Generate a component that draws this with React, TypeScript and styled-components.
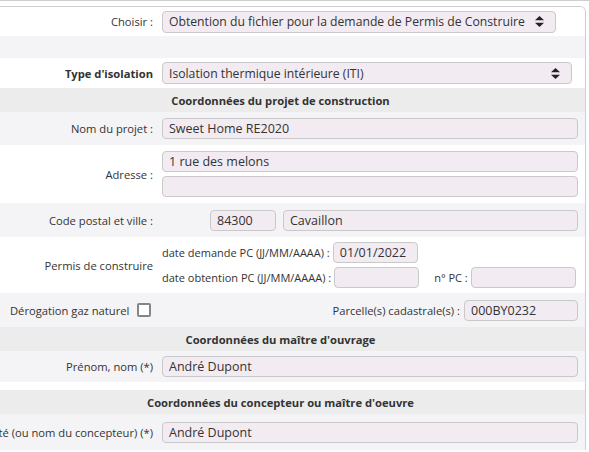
import React from "react";
import styled, { createGlobalStyle } from "styled-components";

const Global = createGlobalStyle`
  html, body { margin: 0; padding: 0; background: #fff; overflow: hidden; }
  body { font-family: "Open Sans", "Noto Sans", sans-serif; font-size: 11.2px; color: #333; }
`;

const TopLine = styled.div`
  height: 6px;
  border-top: 1px solid #cfcfcf;
  box-sizing: border-box;
`;

const Panel = styled.div`
  width: 586px;
  border-top: 1px solid #cfcfcf;
  border-right: 1px solid #cfcfcf;
  border-top-right-radius: 6px;
  box-sizing: border-box;
  overflow: hidden;
`;

const Row = styled.div<{ $bg: string; $h: number }>`
  display: flex;
  align-items: center;
  background: ${(p) => p.$bg};
  height: ${(p) => p.$h}px;
  box-sizing: border-box;
`;

const Label = styled.div<{ $bold?: boolean }>`
  flex: 0 0 153px;
  width: 153px;
  min-width: 0;
  display: flex;
  justify-content: flex-end;
  white-space: nowrap;
  font-weight: ${(p) => (p.$bold ? 700 : 400)};
  margin-right: 9px;
`;

const Field = styled.div`
  flex: 1;
  display: flex;
  flex-direction: column;
  align-items: stretch;
  gap: 4px;
  padding-right: 7px;
`;

const Header = styled.div<{ $h: number }>`
  background: #ececec;
  height: ${(p) => p.$h}px;
  display: flex;
  align-items: center;
  justify-content: center;
  padding-right: 24px;
  font-weight: 700;
`;

const Gap = styled.div<{ $h: number }>`
  height: ${(p) => p.$h}px;
  background: #fff;
`;

const Input = styled.div<{ $w?: number; $grow?: boolean }>`
  box-sizing: border-box;
  height: 21px;
  ${(p) => (p.$w ? `width: ${p.$w}px; flex-shrink: 0; align-self: flex-start;` : "")}
  ${(p) => (p.$grow ? "flex: 1;" : "")}
  background: #f2ebf2;
  border: 1px solid #c9c9c9;
  border-radius: 4px;
  padding: 0 6px;
  display: flex;
  align-items: center;
  font-size: 12.5px;
  white-space: nowrap;
  overflow: hidden;
`;

const Select = styled(Input)`
  height: 22px;
  font-size: 12.2px;
  justify-content: space-between;
  padding-right: 11px;
`;

const Inline = styled.div<{ $gap?: number }>`
  display: flex;
  align-items: center;
  gap: ${(p) => p.$gap ?? 3}px;
  white-space: nowrap;
`;

const SubLabel = styled.span<{ $ml?: number }>`
  font-size: 11px;
  margin-left: ${(p) => p.$ml ?? 0}px;
`;

const Grid = styled.div`
  display: flex;
  flex-direction: column;
  gap: 4px;
`;

const Check = styled.div`
  width: 10px;
  height: 10px;
  border: 2px solid #858585;
  border-radius: 2px;
  background: #fff;
  margin-left: 4px;
`;

const Half = styled.div<{ $end?: boolean }>`
  flex: 1;
  display: flex;
  align-items: center;
  justify-content: ${(p) => (p.$end ? "flex-end" : "flex-start")};
  gap: 4px;
  white-space: nowrap;
`;

const Arrows = () => (
  <svg width="9" height="11" viewBox="0 0 9 11">
    <path d="M4.5 0 L9 4.2 L0 4.2 Z" fill="#222" />
    <path d="M4.5 11 L9 6.8 L0 6.8 Z" fill="#222" />
  </svg>
);

const LIGHT = "#f4f3f5";

export default function App() {
  return (
    <>
      <Global />
      <TopLine />
      <Panel>
        <Row $bg="#fff" $h={29}>
          <Label>Choisir :</Label>
          <Field>
            <Select $w={394}>
              <span>Obtention du fichier pour la demande de Permis de Construire</span>
              <Arrows />
            </Select>
          </Field>
        </Row>
        <Row $bg={LIGHT} $h={22} />
        <Row $bg="#fff" $h={30}>
          <Label $bold>Type d'isolation</Label>
          <Field>
            <Select $w={410}>
              <span>Isolation thermique intérieure (ITI)</span>
              <Arrows />
            </Select>
          </Field>
        </Row>
        <Header $h={24}>Coordonnées du projet de construction</Header>
        <Row $bg={LIGHT} $h={33}>
          <Label>Nom du projet :</Label>
          <Field>
            <Input>Sweet Home RE2020</Input>
          </Field>
        </Row>
        <Row $bg="#fff" $h={58}>
          <Label>Adresse :</Label>
          <Field>
            <Input>1 rue des melons</Input>
            <Input />
          </Field>
        </Row>
        <Row $bg={LIGHT} $h={34}>
          <Label>Code postal et ville :</Label>
          <Field>
            <Inline $gap={7}>
              <Inline $gap={0}>
                <span style={{ width: 48 }} />
                <Input $w={66}>84300</Input>
              </Inline>
              <Input $grow>Cavaillon</Input>
            </Inline>
          </Field>
        </Row>
        <Row $bg="#fff" $h={56}>
          <Label>Permis de construire</Label>
          <Grid>
            <Inline $gap={3}>
              <SubLabel>date demande PC (JJ/MM/AAAA) :</SubLabel>
              <Input $w={85}>01/01/2022</Input>
            </Inline>
            <Inline $gap={3}>
              <SubLabel>date obtention PC (JJ/MM/AAAA) :</SubLabel>
              <Input $w={85} />
              <SubLabel $ml={12}>n° PC :</SubLabel>
              <Input $w={105} />
            </Inline>
          </Grid>
        </Row>
        <Row $bg={LIGHT} $h={34}>
          <Half style={{ paddingLeft: 10 }}>
            <span>Dérogation gaz naturel</span>
            <Check />
          </Half>
          <Half $end style={{ paddingRight: 7 }}>
            <span>Parcelle(s) cadastrale(s) :</span>
            <Input $w={114}>000BY0232</Input>
          </Half>
        </Row>
        <Header $h={24}>Coordonnées du maître d'ouvrage</Header>
        <Row $bg={LIGHT} $h={31}>
          <Label>Prénom, nom (*)</Label>
          <Field>
            <Input>André Dupont</Input>
          </Field>
        </Row>
        <Gap $h={8} />
        <Header $h={24}>Coordonnées du concepteur ou maître d'oeuvre</Header>
        <Row $bg={LIGHT} $h={36}>
          <Label>Nom de la société (ou nom du concepteur) (*)</Label>
          <Field>
            <Input>André Dupont</Input>
          </Field>
        </Row>
      </Panel>
    </>
  );
}
